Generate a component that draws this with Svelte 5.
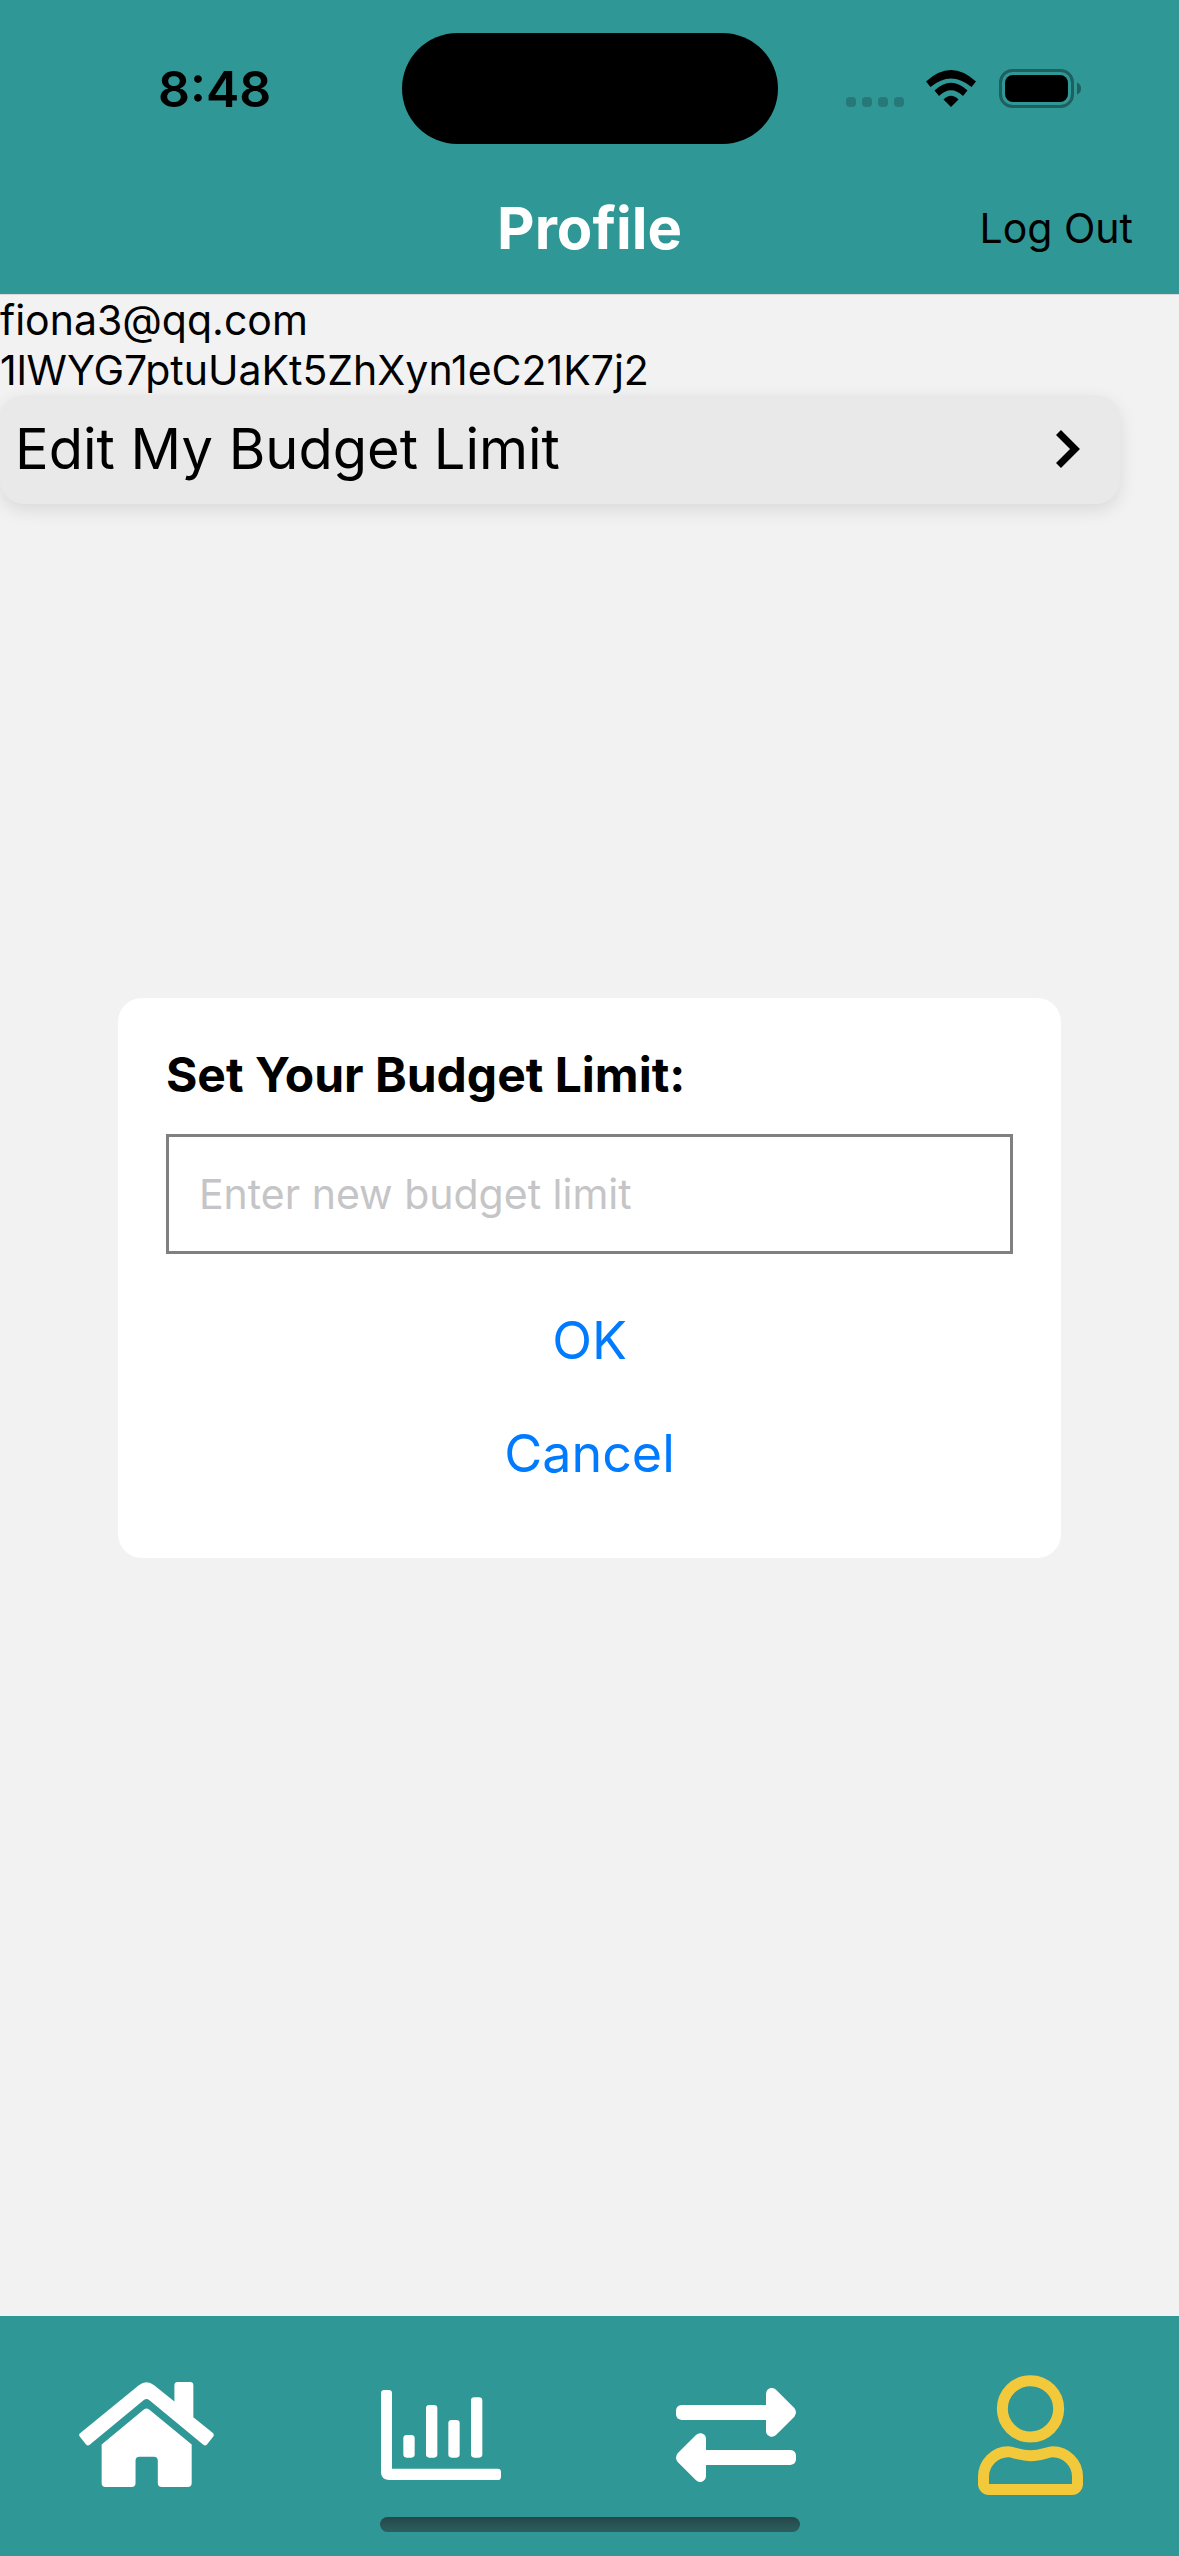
<script>
  let email = 'fiona3@qq.com';
  let userId = '1lWYG7ptuUaKt5ZhXyn1eC21K7j2';
  let limit = '';
</script>

<div class="screen">
  <header>
    <div class="status">
      <span class="time">8:48</span>
      <span class="island"></span>
      <div class="indicators">
        <span class="dots"><i></i><i></i><i></i><i></i></span>
        <svg class="wifi" viewBox="0 0 50 37" aria-hidden="true">
          <path d="M0 11.500Q25 -11.500 50 11.500L45.500 17Q25 0 4.500 17Z" />
          <path d="M8.500 20.500Q25 5 41.500 20.500L37 26Q25 14.500 13 26Z" />
          <path d="M17.500 29.500Q25 22 32.500 29.500L25 37Z" />
        </svg>
        <svg class="battery" viewBox="0 0 82 39" aria-hidden="true">
          <rect x="1.500" y="1.500" width="72" height="36" rx="12" fill="none" stroke="#1f5f5e" stroke-width="3" />
          <rect x="6" y="6" width="63" height="27" rx="8" />
          <path d="M78 13.500Q82 15 82 19.500T78 25.500Z" fill="#1f5f5e" />
        </svg>
      </div>
    </div>
    <div class="bar">
      <h1>Profile</h1>
      <button class="logout" type="button">Log Out</button>
    </div>
  </header>

  <main>
    <p>{email}</p>
    <p>{userId}</p>
    <button class="row" type="button">
      <span>Edit My Budget Limit</span>
      <svg viewBox="0 0 24 38" aria-hidden="true">
        <path d="M2.500 2.500L19 19L2.500 35.500" fill="none" stroke="#000" stroke-width="7" />
      </svg>
    </button>
  </main>

  <nav aria-label="Main">
    <a href="#home" aria-label="Home">
      <svg class="home" viewBox="117 247 406 316">
        <path d="M120 401L297 257Q320 239 343 257L404 306V257Q404 247 414 247H451Q461 247 461 257V353L519 400Q525 405 521 411L502 435Q497 441 491 436L328 301Q320 295 312 301L149 436Q143 441 138 435L119 411Q115 405 120 401Z" />
        <path d="M185 435L312 330Q320 324 328 330L456 435V551Q456 563 444 563H366Q354 563 354 551V484Q354 472 342 472H299Q287 472 287 484V551Q287 563 275 563H197Q185 563 185 551Z" />
      </svg>
    </a>
    <a href="#statistics" aria-label="Statistics">
      <svg class="chart" viewBox="1026 270 360 270">
        <path d="M1036 270H1049Q1059 270 1059 280V506H1376Q1386 506 1386 516V530Q1386 540 1376 540H1049Q1026 538 1026 517V280Q1026 270 1036 270Z" />
        <rect x="1093" y="405" width="34" height="68" rx="10" />
        <rect x="1161" y="315" width="34" height="158" rx="10" />
        <rect x="1228" y="360" width="34" height="113" rx="10" />
        <rect x="1296" y="292" width="34" height="181" rx="10" />
      </svg>
    </a>
    <a href="#transactions" aria-label="Transactions">
      <svg class="swap" viewBox="111 264 360 282">
        <path d="M128 315H381V281Q382 268 395 264Q404 263 411 269L466 324Q476 337 466 350L411 405Q404 412 395 410Q382 407 381 394V360H128Q111 358 111 343V332Q111 317 128 315Z" />
        <path d="M454 495H201V529Q200 542 187 546Q178 547 171 541L116 486Q106 473 116 460L171 405Q178 398 187 400Q200 403 201 416V450H454Q471 452 471 467V478Q471 493 454 495Z" />
      </svg>
    </a>
    <a href="#profile" aria-label="Profile" aria-current="page">
      <svg class="person" viewBox="1014 225 315 360">
        <circle cx="1171.500" cy="326.500" r="84.500" />
        <path d="M1047 568.500A16.500 16.500 0 0 1 1030.500 552V530A75 75 0 0 1 1105 455.500C1120 455.500 1139 467 1171.500 467S1223 455.500 1238 455.500A75 75 0 0 1 1312.500 530V552A16.500 16.500 0 0 1 1296 568.500Z" />
      </svg>
    </a>
    <span class="grip"></span>
  </nav>

  <div class="overlay">
    <form class="dialog" on:submit|preventDefault>
      <label for="limit">Set Your Budget Limit:</label>
      <input id="limit" type="text" placeholder="Enter new budget limit" bind:value={limit} />
      <button type="submit">OK</button>
      <button type="button">Cancel</button>
    </form>
  </div>
</div>

<style>
  :global(body) {
    margin: 0;
    background: #f2f2f2;
  }

  .screen {
    display: flex;
    flex-direction: column;
    min-height: 100vh;
    font-family: Inter, 'Liberation Sans', sans-serif;
    font-size: 41px;
    color: #000;
  }

  button {
    margin: 0;
    padding: 0;
    border: 0;
    background: none;
    font: inherit;
    color: inherit;
    cursor: pointer;
  }

  svg {
    display: block;
    flex: none;
  }

  header {
    background: #2f9795;
    border-bottom: 1px solid #d8d8d8;
  }

  .status {
    display: grid;
    grid-template-columns: 1fr 376px 1fr;
    align-items: center;
    height: 177px;
  }

  .time {
    padding-left: 28px;
    text-align: center;
    font-size: 50px;
    font-weight: 600;
  }

  .island {
    height: 111px;
    border-radius: 56px;
    background: #000;
  }

  .indicators {
    display: flex;
    align-items: center;
    justify-content: flex-end;
    padding-right: 98px;
  }

  .dots {
    display: flex;
    gap: 6px;
    padding-top: 26px;
    margin-right: 22px;
  }

  .dots i {
    width: 10px;
    height: 10px;
    border-radius: 4px;
    background: #267978;
  }

  .wifi {
    width: 50px;
    height: 37px;
    margin-right: 23px;
  }

  .battery {
    width: 82px;
    height: 39px;
  }

  .bar {
    display: grid;
    grid-template-columns: 1fr auto 1fr;
    align-items: center;
    height: 101px;
    padding: 0 46px 16px;
  }

  h1 {
    grid-column: 2;
    margin: 0;
    font-size: 58px;
    font-weight: 700;
    color: #fff;
  }

  .logout {
    justify-self: end;
  }

  main {
    flex: 1;
  }

  p {
    margin: 0;
    line-height: 50px;
  }

  .row {
    display: flex;
    align-items: center;
    justify-content: space-between;
    width: 95%;
    padding: 18px 40px 19px 15px;
    border-radius: 24px;
    background: #e9e9e9;
    box-shadow: 0 6px 18px rgba(0, 0, 0, 0.1);
    font-size: 56px;
    line-height: 72px;
  }

  .row svg {
    width: 24px;
    height: 38px;
  }

  nav {
    position: relative;
    display: grid;
    grid-template-columns: repeat(4, 1fr);
    height: 240px;
    background: #2f9795;
  }

  nav a {
    display: flex;
    align-items: center;
    justify-content: center;
    padding: 0 2px 3px 0;
    fill: #fff;
  }

  .home {
    width: 135px;
    height: 105px;
  }

  .chart {
    width: 120px;
    height: 90px;
  }

  .swap {
    width: 120px;
    height: 94px;
  }

  .person {
    width: 105px;
    height: 120px;
    fill: none;
    stroke: #f2c93b;
    stroke-width: 33;
  }

  .grip {
    position: absolute;
    bottom: 24px;
    left: 0;
    right: 0;
    width: 420px;
    height: 15px;
    margin: 0 auto;
    border-radius: 8px;
    background: linear-gradient(#264749, #2b5f5f);
  }

  .overlay {
    position: fixed;
    inset: 0;
    display: flex;
    align-items: center;
    justify-content: center;
  }

  .dialog {
    display: flex;
    flex-direction: column;
    box-sizing: border-box;
    width: 80%;
    padding: 48px;
    border-radius: 24px;
    background: #fff;
  }

  label {
    margin-bottom: 30px;
    font-size: 48px;
    font-weight: 700;
    line-height: 58px;
  }

  input {
    box-sizing: border-box;
    width: 100%;
    height: 120px;
    margin: 0 0 30px;
    padding: 0 30px;
    border: 3px solid #808080;
    border-radius: 0;
    background: #fff;
    font: inherit;
  }

  input::placeholder {
    color: #c5c5c7;
    opacity: 1;
  }

  .dialog button {
    font-size: 52px;
    line-height: 113px;
    color: #007aff;
  }
</style>
